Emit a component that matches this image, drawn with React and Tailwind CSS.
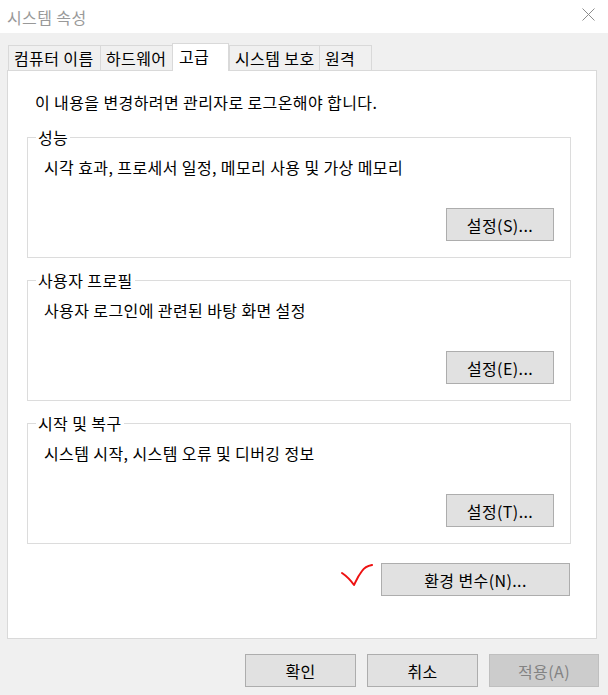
import React from 'react';

const font = { fontFamily: '"Noto Sans CJK KR", "Noto Sans", sans-serif' };

const Btn = ({ children, className = '', disabled = false }) => (
  <button
    className={`h-[33px] border text-[16px] tracking-[0.4px] leading-none flex items-center justify-center ${
      disabled ? 'bg-[#cccccc] border-[#bfbfbf] text-[#838383]' : 'bg-[#e1e1e1] border-[#adadad] text-black'
    } ${className}`}
  >
    {children}
  </button>
);

const GroupBox = ({ title, text, button }) => (
  <div className="relative w-[544px] h-[121px] border border-[#dcdcdc] flex flex-col">
    <span className="absolute -top-[11px] left-[8px] bg-white px-[2px] leading-[20px]">{title}</span>
    <p className="pl-[16px] pt-[19px] leading-[20px]">{text}</p>
    <div className="mt-auto mb-[16px] mr-[16px] flex justify-end">
      <Btn className="w-[108px]">{button}</Btn>
    </div>
  </div>
);

const tabs = [
  { label: '컴퓨터 이름', w: 'w-[92px]' },
  { label: '하드웨어', w: 'w-[72px]' },
  { label: '고급', w: 'w-[57px]', active: true },
  { label: '시스템 보호', w: 'w-[90px]' },
  { label: '원격', w: 'w-[53px]' },
];

export default function App() {
  return (
    <div className="w-[608px] h-[695px] bg-[#f0f0f0] flex flex-col text-black text-[16px] tracking-[0.4px]" style={font}>
      {/* title bar */}
      <div className="h-[33px] bg-white flex items-center justify-between pl-[7px] pr-[13px]">
        <span className="text-[#999999]">시스템 속성</span>
        <svg width="13" height="13" viewBox="0 0 13 13" className="mb-[4px]">
          <path d="M0.5 0.5L12.5 12.5M12.5 0.5L0.5 12.5" stroke="#8c8c8c" strokeWidth="1" />
        </svg>
      </div>

      {/* tabs */}
      <div className="pt-[10px] pl-[8px] flex items-end h-[37px]">
        {tabs.map((t, i) =>
          t.active ? (
            <div
              key={t.label}
              className={`relative z-10 ${t.w} h-[28px] -mb-px bg-white border-t border-l border-r border-[#d9d9d9] pl-[6px] leading-[25px] whitespace-nowrap`}
            >
              {t.label}
            </div>
          ) : (
            <div
              key={t.label}
              className={`${t.w} h-[25px] border-t border-l border-[#d9d9d9] ${
                i === tabs.length - 1 ? 'border-r' : ''
              } pl-[5px] leading-[24px] whitespace-nowrap`}
            >
              {t.label}
            </div>
          )
        )}
      </div>

      {/* panel */}
      <div className="ml-[7px] w-[590px] h-[569px] bg-white border border-[#d9d9d9] flex flex-col">
        <p className="pl-[27px] pt-[21px] leading-[20px]">이 내용을 변경하려면 관리자로 로그온해야 합니다.</p>
        <div className="pl-[19px] pt-[25px] flex flex-col gap-[22px]">
          <GroupBox title="성능" text="시각 효과, 프로세서 일정, 메모리 사용 및 가상 메모리" button="설정(S)..." />
          <GroupBox title="사용자 프로필" text="사용자 로그인에 관련된 바탕 화면 설정" button="설정(E)..." />
          <GroupBox title="시작 및 복구" text="시스템 시작, 시스템 오류 및 디버깅 정보" button="설정(T)..." />
        </div>
        <div className="mt-[19px] pr-[26px] flex justify-end items-start gap-[8px]">
          <svg width="32" height="24" viewBox="0 0 32 24" className="mt-[1px]">
            <path
              d="M1 9 C4 11 8 14 13 21 C15 17 17 12 21 7 C23 4 26 2 31 1"
              fill="none"
              stroke="#ee1111"
              strokeWidth="2"
              strokeLinecap="round"
              strokeLinejoin="round"
            />
          </svg>
          <Btn className="w-[189px] h-[32px]">환경 변수(N)...</Btn>
        </div>
      </div>

      {/* bottom buttons */}
      <div className="mt-[15px] pr-[9px] flex justify-end gap-[11px]">
        <Btn className="w-[111px]">확인</Btn>
        <Btn className="w-[111px]">취소</Btn>
        <Btn className="w-[110px]" disabled>
          적용(A)
        </Btn>
      </div>
    </div>
  );
}
